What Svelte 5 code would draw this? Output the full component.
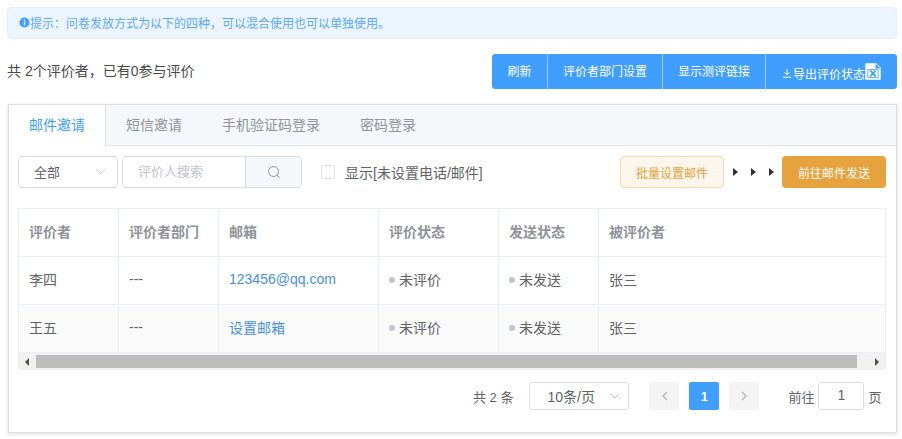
<script>
  const tabs = ['邮件邀请', '短信邀请', '手机验证码登录', '密码登录'];
  const columns = ['评价者', '评价者部门', '邮箱', '评价状态', '发送状态', '被评价者'];
  const rows = [
    { name: '李四', dept: '---', email: '123456@qq.com', status: '未评价', send: '未发送', target: '张三' },
    { name: '王五', dept: '---', email: '设置邮箱', status: '未评价', send: '未发送', target: '张三' }
  ];
</script>

<main class="page">
  <div class="alert">
    <svg class="info" viewBox="0 0 12 12" width="11" height="11">
      <circle cx="6" cy="6" r="5.5" fill="#409eff" />
      <rect x="5.2" y="5" width="1.6" height="4.2" fill="#fff" />
      <rect x="5.2" y="2.8" width="1.6" height="1.5" fill="#fff" />
    </svg>
    <span>提示：问卷发放方式为以下的四种，可以混合使用也可以单独使用。</span>
  </div>

  <div class="summary">
    <span class="count">共 2个评价者，已有0参与评价</span>
    <div class="btn-group">
      <button class="w1">刷新</button>
      <button class="w2">评价者部门设置</button>
      <button class="w3">显示测评链接</button>
      <button class="w4">
        <svg viewBox="0 0 10 10" width="10" height="10" fill="none" stroke="#fff" stroke-width="1">
          <path d="M5 1v5.5M2.4 4.4 5 7l2.6-2.6M1 9.2h8" />
        </svg>
        <span>导出评价状态</span>
        <svg class="xls" viewBox="0 0 16 17" width="16" height="17">
          <path d="M1 1h10l4 4v11H1z" fill="#fff" stroke="#fff" stroke-width="1.4" stroke-linejoin="round" />
          <path d="M10.5 .5v5h5z" fill="#409eff" />
          <path d="M2.8 6.5h10.4v8H2.8z" fill="#fff" stroke="#409eff" stroke-width=".8" />
          <path d="M5.4 7.6 10.6 13.4M10.6 7.6 5.4 13.4" stroke="#409eff" stroke-width="1.8" />
        </svg>
      </button>
    </div>
  </div>

  <section class="card">
    <div class="tabs">
      {#each tabs as tab, i}
        <div class="tab" class:active={i === 0}>{tab}</div>
      {/each}
    </div>

    <div class="body">
      <div class="toolbar">
        <div class="select">
          <span>全部</span>
          <svg class="chev" viewBox="0 0 12 7" width="12" height="7"><path d="M1 1l5 5 5-5" fill="none" stroke="#c0c4cc" /></svg>
        </div>
        <div class="search">
          <div class="search-input">评价人搜索</div>
          <div class="search-btn">
            <svg viewBox="0 0 14 14" width="14" height="14" fill="none" stroke="#909399" stroke-width="1">
              <circle cx="6.5" cy="6.5" r="5" />
              <path d="M10.2 10.2 12.6 12.6" />
            </svg>
          </div>
        </div>
        <label class="check">
          <span class="box"></span>
          <span>显示[未设置电话/邮件]</span>
        </label>
        <div class="actions">
          <button class="batch">批量设置邮件</button>
          <div class="arrows">
            <i></i><i></i><i></i>
          </div>
          <button class="go">前往邮件发送</button>
        </div>
      </div>

      <div class="table">
        <div class="row head">
          {#each columns as col}
            <div class="cell">{col}</div>
          {/each}
        </div>
        {#each rows as row, i}
          <div class="row" class:striped={i === 1}>
            <div class="cell">{row.name}</div>
            <div class="cell">{row.dept}</div>
            <div class="cell link">{row.email}</div>
            <div class="cell"><i class="dot"></i>{row.status}</div>
            <div class="cell"><i class="dot"></i>{row.send}</div>
            <div class="cell">{row.target}</div>
          </div>
        {/each}
        <div class="scrollbar">
          <span class="arrow left"></span>
          <div class="track"><div class="thumb"></div></div>
          <span class="arrow right"></span>
        </div>
      </div>

      <div class="pager">
        <span class="total">共 2 条</span>
        <div class="size">
          <span>10条/页</span>
          <svg viewBox="0 0 10 6" width="10" height="6"><path d="M1 1l4 4 4-4" fill="none" stroke="#c0c4cc" /></svg>
        </div>
        <div class="pages">
          <div class="page-btn">
            <svg viewBox="0 0 7 10" width="7" height="10"><path d="M6 1 2 5l4 4" fill="none" stroke="#b4b7bd" stroke-width="1.4" /></svg>
          </div>
          <div class="page-btn current">1</div>
          <div class="page-btn">
            <svg viewBox="0 0 7 10" width="7" height="10"><path d="M1 1l4 4-4 4" fill="none" stroke="#b4b7bd" stroke-width="1.4" /></svg>
          </div>
        </div>
        <div class="jump">
          <span>前往</span>
          <div class="jump-input">1</div>
          <span>页</span>
        </div>
      </div>
    </div>
  </section>
</main>

<style>
  :global(body) {
    margin: 0;
    background: #fff;
    font-family: "Liberation Sans", "Noto Sans CJK SC", sans-serif;
  }
  .page {
    width: 902px;
    height: 439px;
    box-sizing: border-box;
    padding: 7px 5px 0 7px;
    font-size: 14px;
    color: #606266;
    overflow: hidden;
  }
  button {
    font-family: inherit;
    border: 0;
    padding: 0;
    margin: 0;
    cursor: pointer;
  }
  .alert {
    height: 32px;
    box-sizing: border-box;
    display: flex;
    align-items: center;
    padding: 0 0 2px 11px;
    background: #ecf5ff;
    border: 1px solid #e3effb;
    border-radius: 4px;
    color: #5aa9f8;
    font-size: 12px;
  }
  .info {
    flex: none;
  }
  .summary {
    display: flex;
    align-items: center;
    justify-content: space-between;
    height: 35px;
    margin-top: 15px;
  }
  .count {
    font-size: 14px;
    color: #4a4a4a;
    padding-bottom: 4px;
  }
  .btn-group {
    display: flex;
    height: 35px;
    background: #409eff;
    border-radius: 4px;
    overflow: hidden;
  }
  .btn-group button {
    background: #409eff;
    color: #fff;
    font-size: 12px;
    border-left: 1px solid #a3cfff;
    display: flex;
    align-items: center;
    justify-content: center;
  }
  .btn-group button:first-child {
    border-left: 0;
  }
  .w1, .w2, .w3 {
    padding-bottom: 2px;
  }
  .w1 { width: 55px; }
  .w2 { width: 115px; }
  .w3 { width: 103px; }
  .w4 { width: 132px; }
  .w4 svg:first-child {
    margin-top: 3px;
    margin-right: 1px;
  }
  .w4 span {
    margin-top: 3px;
  }
  .card {
    margin: 15px 0 0 1px;
    height: 329px;
    box-sizing: border-box;
    border: 1px solid #dcdfe6;
    box-shadow: 0 1px 4px rgba(0, 0, 0, 0.14);
    background: #fff;
  }
  .tabs {
    display: flex;
    height: 40px;
    background: #f5f7fa;
    border-bottom: 1px solid #e4e7ed;
  }
  .tab {
    padding: 0 20px;
    line-height: 41px;
    font-size: 14px;
    color: #909399;
  }
  .tab.active {
    height: 41px;
    background: #fff;
    color: #409eff;
    border-right: 1px solid #dcdfe6;
  }
  .body {
    padding: 10px 10px 0 9px;
  }
  .toolbar {
    display: flex;
    align-items: center;
    height: 32px;
  }
  .select {
    width: 100px;
    height: 32px;
    box-sizing: border-box;
    border: 1px solid #dcdfe6;
    border-radius: 4px;
    display: flex;
    align-items: center;
    justify-content: space-between;
    padding: 0 11px 2px 15px;
    font-size: 13px;
  }
  .chev {
    width: 11px;
  }
  .search {
    display: flex;
    width: 180px;
    height: 32px;
    margin-left: 4px;
    box-sizing: border-box;
    border: 1px solid #dcdfe6;
    border-radius: 4px;
    overflow: hidden;
  }
  .search-input {
    flex: 1;
    line-height: 30px;
    padding-left: 15px;
    font-size: 13px;
    color: #c0c4cc;
  }
  .search-btn {
    width: 55px;
    background: #f5f7fa;
    border-left: 1px solid #dcdfe6;
    display: flex;
    align-items: center;
    justify-content: center;
  }
  .check {
    display: flex;
    align-items: center;
    margin-left: 19px;
    font-size: 14px;
  }
  .box {
    width: 14px;
    height: 14px;
    box-sizing: border-box;
    border: 1px solid #dcdfe6;
    border-radius: 2px;
    margin-right: 10px;
  }
  .actions {
    margin-left: auto;
    display: flex;
    align-items: center;
  }
  .batch {
    width: 104px;
    height: 32px;
    box-sizing: border-box;
    background: #fdf6ec;
    border: 1px solid #f5dab1;
    border-radius: 4px;
    color: #e6a23c;
    font-size: 12px;
  }
  .arrows {
    display: flex;
    gap: 13px;
    margin: 0 8px 0 9px;
  }
  .arrows i {
    width: 0;
    height: 0;
    border-left: 5px solid #303133;
    border-top: 4px solid transparent;
    border-bottom: 4px solid transparent;
  }
  .go {
    width: 104px;
    height: 32px;
    background: #e6a23c;
    border-radius: 4px;
    color: #fff;
    font-size: 12px;
  }
  .table {
    margin-top: 20px;
    width: 868px;
    border-top: 1px solid #ebeef5;
  }
  .row {
    display: grid;
    grid-template-columns: 100px 100px 160px 120px 100px 1fr;
    height: 48px;
    box-sizing: border-box;
    border-bottom: 1px solid #ebeef5;
    border-left: 1px solid #ebeef5;
  }
  .row.head {
    font-weight: 700;
    color: #909399;
    font-size: 14px;
  }
  .row.striped {
    background: #fafafa;
  }
  .cell {
    display: flex;
    align-items: center;
    padding: 0 0 4px 10px;
    border-right: 1px solid #ebeef5;
  }
  .link {
    color: #4a90e2;
    padding-bottom: 3px;
  }
  .dot {
    width: 6px;
    height: 6px;
    border-radius: 50%;
    background: #c0c4cc;
    margin: 3px 4px 0 0;
  }
  .scrollbar {
    display: flex;
    align-items: center;
    height: 17px;
    background: #f1f1f1;
  }
  .arrow {
    width: 18px;
    display: flex;
    justify-content: center;
  }
  .arrow::before {
    content: '';
    border-top: 4px solid transparent;
    border-bottom: 4px solid transparent;
  }
  .arrow.left::before {
    border-right: 4px solid #505050;
  }
  .arrow.right::before {
    border-left: 4px solid #505050;
  }
  .track {
    flex: 1;
    height: 13px;
  }
  .thumb {
    width: 821px;
    height: 13px;
    background: #bdbdbd;
  }
  .pager {
    display: flex;
    align-items: center;
    height: 28px;
    margin-top: 12px;
    font-size: 13px;
  }
  .total {
    margin-left: 455px;
  }
  .size {
    width: 100px;
    height: 28px;
    box-sizing: border-box;
    margin-left: 16px;
    border: 1px solid #dcdfe6;
    border-radius: 3px;
    display: flex;
    align-items: center;
    justify-content: space-between;
    padding: 0 8px 0 17px;
    font-size: 14px;
  }
  .pages {
    display: flex;
    gap: 10px;
    margin-left: 20px;
  }
  .page-btn {
    width: 30px;
    height: 28px;
    background: #f4f4f5;
    border-radius: 2px;
    display: flex;
    align-items: center;
    justify-content: center;
  }
  .page-btn.current {
    background: #409eff;
    color: #fff;
    font-weight: 700;
  }
  .jump {
    display: flex;
    align-items: center;
    margin-left: 29px;
  }
  .jump-input {
    width: 46px;
    height: 28px;
    box-sizing: border-box;
    margin: 0 4px;
    border: 1px solid #dcdfe6;
    border-radius: 3px;
    text-align: center;
    line-height: 24px;
    font-size: 14px;
  }
</style>
